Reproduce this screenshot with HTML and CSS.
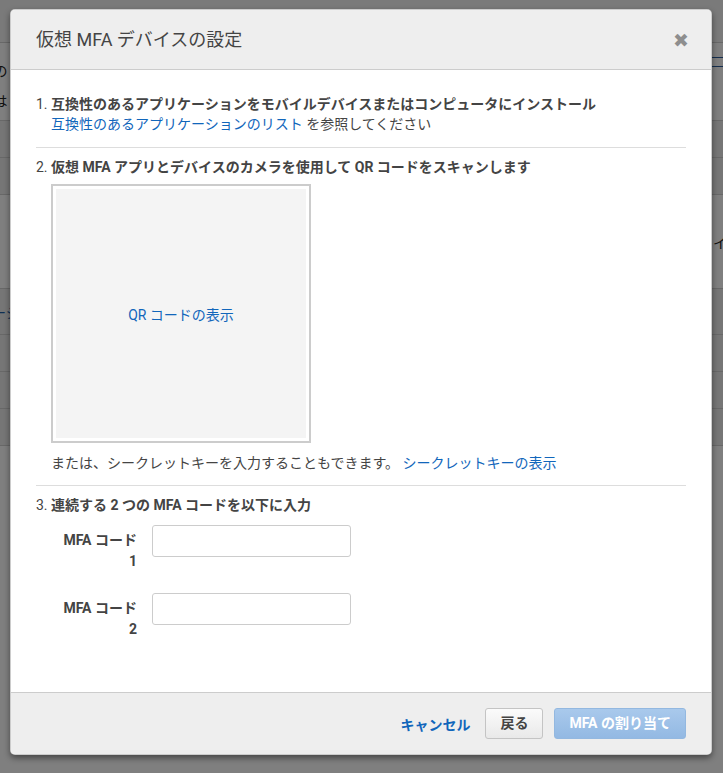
FILE: index.html
```html
<!DOCTYPE html>
<html lang="ja">
<head>
<meta charset="utf-8">
<title>仮想 MFA デバイスの設定</title>
<link rel="stylesheet" href="styles.css">
</head>
<body>
<div class="page">
  <div class="prow top"></div>
  <div class="prow tall"><span class="ptext">デバイスの</span><span class="pbox"></span></div>
  <div class="prow tall2"><span class="ptext">デバイスは</span></div>
  <div class="prow band"></div>
  <div class="prow band"></div>
  <div class="prow mid"><span class="ptext">コードを</span><span class="ptext right">イ</span></div>
  <div class="prow band wide"><span class="ptext link">ーシ</span></div>
  <div class="prow band"></div>
  <div class="prow band"></div>
  <div class="prow band"></div>
  <div class="prow rest"></div>
</div>
<div class="overlay"></div>
<div class="modal" role="dialog">
  <div class="modal-header">
    <h1 class="modal-title">仮想 MFA デバイスの設定</h1>
    <span class="close">&#x2716;</span>
  </div>
  <div class="modal-body">
    <div class="step">
      <div class="step-title">1. <b>互換性のあるアプリケーションをモバイルデバイスまたはコンピュータにインストール</b></div>
      <div class="step-sub"><a class="link" href="#">互換性のあるアプリケーションのリスト</a> を参照してください</div>
    </div>
    <hr class="sep">
    <div class="step">
      <div class="step-title">2. <b>仮想 MFA アプリとデバイスのカメラを使用して QR コードをスキャンします</b></div>
      <div class="qr-frame">
        <div class="qr-inner"><a class="link" href="#">QR コードの表示</a></div>
      </div>
      <div class="secret">または、シークレットキーを入力することもできます。 <a class="link" href="#">シークレットキーの表示</a></div>
    </div>
    <hr class="sep">
    <div class="step">
      <div class="step-title">3. <b>連続する 2 つの MFA コードを以下に入力</b></div>
      <div class="form-row">
        <label class="form-label">MFA コード 1</label>
        <input class="form-input" type="text">
      </div>
      <div class="form-row">
        <label class="form-label">MFA コード 2</label>
        <input class="form-input" type="text">
      </div>
    </div>
  </div>
  <div class="modal-footer">
    <a class="cancel" href="#">キャンセル</a>
    <button class="btn btn-default">戻る</button>
    <button class="btn btn-primary" disabled>MFA の割り当て</button>
  </div>
</div>
</body>
</html>
```

FILE: styles.css
```css
* { box-sizing: border-box; }
html, body { margin: 0; padding: 0; }
body {
  width: 723px;
  height: 773px;
  overflow: hidden;
  position: relative;
  font-family: Roboto, "Noto Sans CJK JP", sans-serif;
  font-size: 14px;
  color: #444;
  background: #fff;
}

/* underlying page */
.page { display: flex; flex-direction: column; height: 773px; }
.prow {
  flex: none;
  position: relative;
  border-bottom: 1px solid #d0d0d0;
  display: flex;
  align-items: center;
  justify-content: space-between;
  overflow: hidden;
  white-space: nowrap;
  font-size: 14px;
  color: #222;
}
.prow.top { height: 43px; background: #f5f5f5; }
.prow.tall { height: 37px; align-items: flex-end; background: #fff; border-bottom: none; }
.prow.tall2 { height: 41px; background: #fff; }
.prow.band { height: 37px; background: #ececec; }
.prow.band.wide { height: 46px; }
.prow.mid { height: 94px; background: #fff; }
.prow.rest { flex: 1; background: #fff; border-bottom: none; }
.ptext { margin-left: -62px; }
.ptext.right { margin-left: 0; margin-right: -4px; }
.ptext.link { color: #1f5fa6; margin-left: -8px; }
.pbox { width: 16px; height: 10px; border: 1px solid #2b5c9c; margin-right: -4px; align-self: center; }

.overlay {
  position: absolute;
  inset: 0;
  background: rgba(0, 0, 0, 0.5);
}

/* modal */
.modal {
  position: absolute;
  left: 10px;
  top: 9px;
  width: 702px;
  height: 746px;
  background: #fff;
  border: 1px solid rgba(0, 0, 0, 0.2);
  border-radius: 5px;
  box-shadow: 0 3px 6px rgba(0, 0, 0, 0.45);
  display: flex;
  flex-direction: column;
  overflow: hidden;
}
.modal-header {
  height: 60px;
  flex: none;
  background: #eee;
  border-bottom: 1px solid #ccc;
  display: flex;
  align-items: center;
  justify-content: space-between;
  padding: 0 22px 0 25px;
}
.modal-title {
  margin: 0;
  font-size: 18px;
  font-weight: normal;
  color: #444;
  line-height: 24px;
}
.close {
  font-family: "DejaVu Sans", sans-serif;
  font-size: 19px;
  color: #8e8e8e;
  line-height: 1;
  margin-top: 1px;
}

.modal-body {
  flex: 1;
  padding: 24px 25px 0 25px;
}
.step-title { line-height: 20px; }
.step-title b { font-weight: bold; }
.step-sub { line-height: 21px; padding-left: 15px; }
.link { color: #1166bb; text-decoration: none; }
.sep {
  border: 0;
  border-top: 1px solid #ddd;
  margin: 12px 0 9px;
}
.qr-frame {
  margin: 7px 0 0 15px;
  width: 260px;
  height: 259px;
  border: 2px solid #ccc;
  padding: 3px;
  background: #fff;
}
.qr-inner {
  width: 100%;
  height: 100%;
  background: #f4f4f4;
  display: flex;
  align-items: center;
  justify-content: center;
}
.secret { margin: 10px 0 0 15px; line-height: 20px; }

.form-row {
  display: flex;
  align-items: flex-start;
  margin-top: 10px;
  padding-left: 21px;
  gap: 15px;
}
.form-row + .form-row { margin-top: 21px; }
.form-label {
  width: 80px;
  text-align: right;
  font-weight: bold;
  line-height: 21px;
  padding-top: 5px;
}
.form-input {
  width: 199px;
  height: 32px;
  border: 1px solid #ccc;
  border-radius: 3px;
  background: #fff;
  font: inherit;
  padding: 4px 8px;
}

.modal-footer {
  flex: none;
  height: 62px;
  background: #eee;
  border-top: 1px solid #ccc;
  display: flex;
  align-items: center;
  justify-content: flex-end;
  padding: 0 25px 0 0;
}
.cancel {
  color: #1166bb;
  font-weight: bold;
  text-decoration: none;
  margin-right: 15px;
}
.btn {
  height: 31px;
  border-radius: 3px;
  font-family: inherit;
  font-size: 14px;
  font-weight: bold;
  padding: 0 14px;
  line-height: 29px;
}
.btn-default {
  color: #444;
  border: 1px solid #c4c4c4;
  background: linear-gradient(#fbfbfb, #e9e9e9);
  margin-right: 11px;
}
.btn-primary {
  color: #fff;
  border: 1px solid #93b8e0;
  background: linear-gradient(#a9c9ec, #93b9e3);
  padding: 0 14px;
}
```
